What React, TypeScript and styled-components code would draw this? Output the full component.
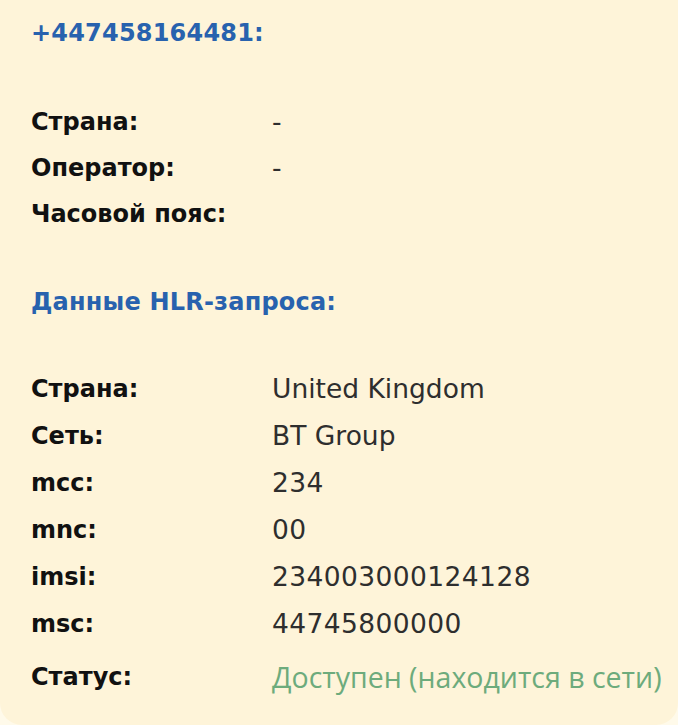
import React from "react";
import styled, { createGlobalStyle } from "styled-components";

const Global = createGlobalStyle`
  html, body { margin: 0; padding: 0; background: #fffaea; }
  body { font-family: "DejaVu Sans", sans-serif; }
`;

const Card = styled.div`
  width: 678px;
  height: 725px;
  box-sizing: border-box;
  background: #fef4d9;
  border-radius: 0 0 22px 22px;
  padding: 18px 0 0 31px;
  display: flex;
  flex-direction: column;
`;

const Heading = styled.div<{ $mt?: number; $mb?: number }>`
  font-family: "DejaVu Sans", sans-serif;
  font-weight: 700;
  font-size: 24px;
  line-height: 30px;
  letter-spacing: 0.2px;
  color: #2862ae;
  margin-top: ${(p) => p.$mt ?? 0}px;
  margin-bottom: ${(p) => p.$mb ?? 0}px;
`;

const Rows = styled.div<{ $gap: number }>`
  display: flex;
  flex-direction: column;
  gap: ${(p) => p.$gap}px;
`;

const Row = styled.div<{ $mt?: number }>`
  display: grid;
  grid-template-columns: 241px 1fr;
  align-items: center;
  height: 30px;
  margin-top: ${(p) => p.$mt ?? 0}px;
`;

const Label = styled.div`
  font-family: "DejaVu Sans", sans-serif;
  font-weight: 700;
  font-size: 24px;
  line-height: 30px;
  color: #111;
`;

const Value = styled.div<{ $num?: boolean }>`
  font-family: "DejaVu Sans", sans-serif;
  font-weight: 400;
  font-size: 26.5px;
  line-height: 30px;
  letter-spacing: ${(p) => (p.$num ? "0.4px" : "0")};
  color: #2e2e2e;
  white-space: nowrap;
`;

const Status = styled(Value)`
  font-family: "Open Sans", "Noto Sans", sans-serif;
  font-size: 28.5px;
  color: #6dab7c;
`;

type Item = [string, string];

const basic: Item[] = [
  ["Страна:", "-"],
  ["Оператор:", "-"],
  ["Часовой пояс:", ""],
];

const hlr: Item[] = [
  ["Страна:", "United Kingdom"],
  ["Сеть:", "BT Group"],
  ["mcc:", "234"],
  ["mnc:", "00"],
  ["imsi:", "234003000124128"],
  ["msc:", "44745800000"],
];

const isNum = (s: string) => /^\d+$/.test(s);

export default function App() {
  return (
    <>
      <Global />
      <Card>
        <Heading $mb={59}>+447458164481:</Heading>
        <Rows $gap={16}>
          {basic.map(([l, v]) => (
            <Row key={l}>
              <Label>{l}</Label>
              <Value>{v}</Value>
            </Row>
          ))}
        </Rows>
        <Heading $mt={58} $mb={57}>Данные HLR-запроса:</Heading>
        <Rows $gap={17}>
          {hlr.map(([l, v]) => (
            <Row key={l}>
              <Label>{l}</Label>
              <Value $num={isNum(v)}>{v}</Value>
            </Row>
          ))}
          <Row $mt={6}>
            <Label>Статус:</Label>
            <Status>Доступен (находится в сети)</Status>
          </Row>
        </Rows>
      </Card>
    </>
  );
}
